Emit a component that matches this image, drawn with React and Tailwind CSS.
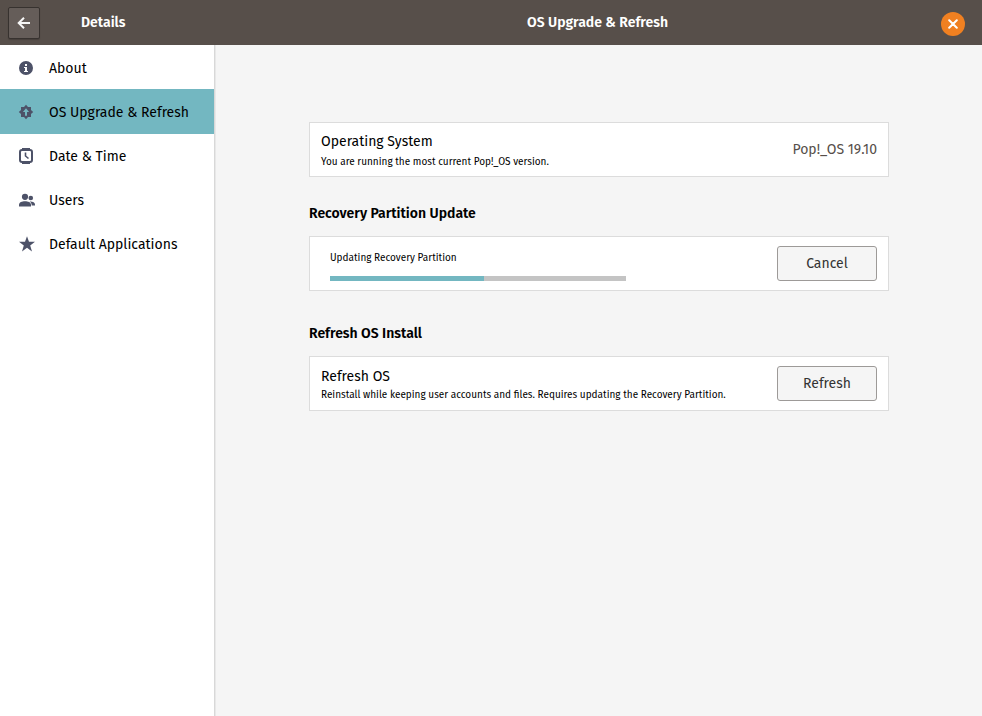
import React from "react";

const InfoIcon = () => (
  <svg width="16" height="16" viewBox="0 0 16 16" fill="#4d5268">
    <path fillRule="evenodd" d="M8 1a7 7 0 1 0 0 14A7 7 0 0 0 8 1zM7 4h2v2H7zM6 7h3v4h1v1H6v-1h1V8H6z" />
  </svg>
);

const UpgradeIcon = () => (
  <svg width="16" height="16" viewBox="0 0 16 16" fill="#4d5268">
    <path
      fillRule="evenodd"
      d="M8 .8L10 3h3v3l2.200 2L13 10v3h-3l-2 2.200L6 13H3v-3L.8 8 3 6V3h3zM8 4.300L4.900 8H7v3.700h2V8h2.100z"
    />
  </svg>
);

const ClockIcon = () => (
  <svg width="16" height="16" viewBox="0 0 16 16" fill="none" stroke="#4d5268" strokeWidth="2">
    <rect x="2" y="2" width="12" height="12" rx="2" />
    <path d="M4 .8h8M4 15.200h8" strokeWidth="1.400" />
    <path d="M7.500 4.500v3.500l3 2.500" strokeWidth="1.600" />
  </svg>
);

const UsersIcon = () => (
  <svg width="18" height="16" viewBox="0 0 18 16" fill="#4d5268">
    <circle cx="7" cy="4.800" r="3.100" />
    <path d="M1 14.500v-1.700C1 10.300 4 9.200 7 9.200s6 1.100 6 3.600v1.700z" />
    <circle cx="12.800" cy="6" r="2.300" />
    <path d="M12.300 9.400c2.700 0 4.700 1.200 4.700 3v1.100h-3.300c0-1.900-.6-3-2.100-4z" />
  </svg>
);

const StarIcon = () => (
  <svg width="18" height="16" viewBox="0 0 18 16" fill="#4d5268">
    <path d="M9 .2l2 5.600h6l-4.800 3.600L14 15.400l-5-3.600-5 3.600 1.800-6L1 5.800h6z" />
  </svg>
);

const NAV = [
  { label: "About", Icon: InfoIcon },
  { label: "OS Upgrade & Refresh", Icon: UpgradeIcon, active: true },
  { label: "Date & Time", Icon: ClockIcon },
  { label: "Users", Icon: UsersIcon },
  { label: "Default Applications", Icon: StarIcon },
];

function Card({ className = "", children }) {
  return (
    <section className={`flex h-[55px] w-[580px] justify-between border border-[#dcdcdc] bg-white px-[11px] ${className}`}>
      {children}
    </section>
  );
}

function ActionButton({ children }) {
  return (
    <button className="mt-[9px] flex h-[35px] w-[100px] items-center justify-center rounded-[3px] border border-[#9d9a98] bg-[#f5f5f5] text-[14px] leading-5 text-[#333333]">
      {children}
    </button>
  );
}

export default function App() {
  return (
    <div className="flex h-[716px] w-[982px] flex-col overflow-hidden whitespace-nowrap bg-[#f5f5f5] font-['Fira_Sans','Noto_Sans',sans-serif] text-black">
      <header className="flex h-[45px] shrink-0 bg-[#574f4a] text-[14px] font-semibold leading-5 text-white">
        <div className="flex w-[214px] shrink-0 pl-2 pt-[7px]">
          <button className="flex h-8 w-8 items-center justify-center rounded-[2px] border border-[#37322f] bg-[#655d59] shadow-[0_1px_1px_rgba(0,0,0,0.2)]">
            <svg width="14" height="14" viewBox="0 0 14 14" fill="none" stroke="#f6f6f6" strokeWidth="2">
              <path d="M13 7H2M7 1.700L1.700 7 7 12.300" />
            </svg>
          </button>
          <span className="ml-[41px] mt-[6px]">Details</span>
        </div>
        <div className="flex flex-1 justify-between">
          <span className="ml-[313px] mt-[13px]">OS Upgrade &amp; Refresh</span>
          <button className="mr-[17px] mt-3 flex h-6 w-6 items-center justify-center rounded-full bg-[#f08021]">
            <svg width="10" height="10" viewBox="0 0 10 10" fill="none" stroke="white" strokeWidth="2" strokeLinecap="round">
              <path d="M1.200 1.200l7.600 7.600M8.800 1.200L1.200 8.800" />
            </svg>
          </button>
        </div>
      </header>

      <div className="flex flex-1">
        <nav className="w-[215px] shrink-0 border-r border-[#d8d8d8] bg-white shadow-[1px_0_0_#e8e8e8]">
          {NAV.map(({ label, Icon, active }) => (
            <div
              key={label}
              className={`flex items-center pl-[18px] text-[14px] leading-5 first:pt-[2px] ${active ? "h-[45px] bg-[#73b7c1]" : "h-11"}`}
            >
              <span className="flex w-[31px]">
                <Icon />
              </span>
              <span className="pt-[2px]">{label}</span>
            </div>
          ))}
        </nav>

        <main className="pl-[94px] pt-[77px]">
          <Card>
            <div className="pt-[9px]">
              <h3 className="text-[14px] leading-5">Operating System</h3>
              <p className="mt-[3px] text-[10px] leading-[14px]">You are running the most current Pop!_OS version.</p>
            </div>
            <span className="mt-[17px] text-[14px] leading-5 text-[#574f4a]">Pop!_OS 19.10</span>
          </Card>

          <h2 className="mt-[27px] text-[14px] font-semibold leading-5">Recovery Partition Update</h2>
          <Card className="mt-3">
            <div className="pl-[9px] pt-[14px]">
              <p className="text-[10px] leading-[14px]">Updating Recovery Partition</p>
              <div className="mt-[11px] h-[5px] w-[296px] bg-[#c4c4c4]">
                <div className="h-full w-[154px] bg-[#73b7c1]" />
              </div>
            </div>
            <ActionButton>Cancel</ActionButton>
          </Card>

          <h2 className="mt-[33px] text-[14px] font-semibold leading-5">Refresh OS Install</h2>
          <Card className="mt-3">
            <div className="pt-[10px]">
              <h3 className="text-[14px] leading-5">Refresh OS</h3>
              <p className="mt-px text-[10px] leading-[14px]">
                Reinstall while keeping user accounts and files. Requires updating the Recovery Partition.
              </p>
            </div>
            <ActionButton>Refresh</ActionButton>
          </Card>
        </main>
      </div>
    </div>
  );
}
